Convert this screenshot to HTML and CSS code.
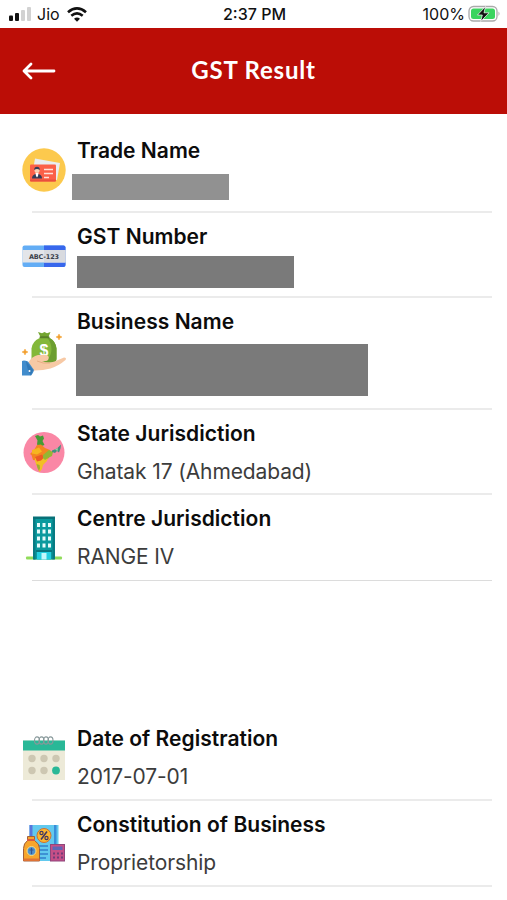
FILE: index.html
```html
<!DOCTYPE html>
<html lang="en">
<head>
    <meta charset="UTF-8">
    <meta name="viewport" content="width=device-width, initial-scale=1.0">
    <title>GST Result</title>
    <link rel="stylesheet" href="styles.css">
</head>
<body>
    <div class="status-bar">
        <div class="status-left">
            <svg class="signal" width="24" height="14" viewBox="0 0 24 14">
                <rect x="1" y="8.500" width="4" height="5.500" rx="1" fill="#111"/>
                <rect x="7" y="6" width="4" height="8" rx="1" fill="#111"/>
                <rect x="13" y="3" width="4" height="11" rx="1" fill="#d2d2d2"/>
                <rect x="19" y="0" width="4" height="14" rx="1" fill="#d2d2d2"/>
            </svg>
            <span class="carrier">Jio</span>
            <svg class="wifi" width="20" height="15" viewBox="0 0 20 15" fill="none" stroke="#111">
                <path d="M1 5.2Q10-2.4 19 5.2" stroke-width="2.7"/>
                <path d="M4.3 8.8Q10 4 15.7 8.8" stroke-width="2.6"/>
                <path d="M7 11.7Q10 9.1 13 11.7L10 14.7z" fill="#111" stroke="none"/>
            </svg>
        </div>
        <div class="status-time">2:37 PM</div>
        <div class="status-right">
            <span class="percent">100%</span>
            <svg class="battery" width="33" height="18" viewBox="0 0 33 18">
                <rect x="1" y="1.5" width="28" height="14.5" rx="4.5" fill="#fff" stroke="#aaa" stroke-width="1.3"/>
                <rect x="3" y="3.5" width="24" height="10.5" rx="2.5" fill="#3bd45f"/>
                <path d="M30.500 6.500q2 2 0 4.500z" fill="#aaa"/>
                <path d="M17.500 1.500L9.500 10h4.800l-1.600 6.500L21 7.800h-5z" fill="#111" stroke="#fff" stroke-width=".7"/>
            </svg>
        </div>
    </div>

    <header class="header">
        <svg class="back" width="34" height="18" viewBox="0 0 34 18" fill="none" stroke="#fff" stroke-width="2.8" stroke-linecap="round" stroke-linejoin="round">
            <path d="M32 9H2M9 2L2 9l7 7"/>
        </svg>
        <h1>GST Result</h1>
    </header>

    <main class="list">
        <section class="row">
            <svg class="icon" viewBox="0 0 44 44">
                <circle cx="22" cy="22" r="21.7" fill="#fcc94d"/>
                <path d="M13 10.500l25 4.500-3 17-25-4z" fill="#e9edf0"/>
                <rect x="8" y="16.500" width="26" height="17" rx="1" fill="#fb6048"/>
                <rect x="8" y="31.500" width="26" height="2" rx="1" fill="#e9503c"/>
                <path d="M10 30.500q0-4 4-4.500h2q4 .5 4 4.500z" fill="#343c58"/>
                <path d="M13.500 25h3l-.5 3-1 1.500-1-1.500z" fill="#fff"/>
                <circle cx="15" cy="22.500" r="2.500" fill="#f8cfb1"/>
                <path d="M12.200 22q0-3.300 2.800-3.300t2.800 3.300q-2.800-2-5.600 0z" fill="#343c58"/>
                <path d="M22 21.500h9M22 25.500h9M22 29.500h5" stroke="#ffe1d9" stroke-width="1.500"/>
            </svg>
            <div class="info">
                <h2>Trade Name</h2>
                <div class="redacted redacted-trade"></div>
            </div>
        </section>

        <section class="row row-short">
            <svg class="icon" viewBox="0 0 44 44">
                <rect x=".5" y="11.500" width="43" height="21.500" rx="2" fill="#63adf5"/>
                <path d="M22 11.500h19.500a2 2 0 0 1 2 2V31a2 2 0 0 1-2 2H22z" fill="#3867ec"/>
                <rect x=".5" y="16" width="43" height="12.500" fill="#e3e5e9"/>
                <path d="M22 16h21.500v12.500H22z" fill="#d8dadf"/>
                <text x="22" y="24.600" class="plate" text-anchor="middle" textLength="30">ABC-123</text>
            </svg>
            <div class="info">
                <h2>GST Number</h2>
                <div class="redacted redacted-number"></div>
            </div>
        </section>

        <section class="row row-tall">
            <svg class="icon" viewBox="0 0 44 44">
                <path d="M16 0l4 1.200L22.500 0 25 1.200 28.500 0 26 6h-7z" fill="#73a530"/>
                <path d="M18.500 5.500h8.500q7 4 7.500 11v10q0 4-4 4H13.500q-4 0-4-4v-10q.5-7 9-11z" fill="#83b83a"/>
                <path d="M27 5.500q7 4 7.500 11v10q0 4-4 4H16q13-1 13.500-13 0-7-4.500-12z" fill="#6c9e30"/>
                <rect x="17.500" y="4.200" width="10" height="2" rx="1" fill="#597f29"/>
                <text x="22" y="23.500" class="dollar" text-anchor="middle">$</text>
                <path d="M6 31q4-7 10-8h8.500q3 1 2 4t-7 2q7 3 13 .500L42 25.500q3 0 1.500 2.500-7 6-15 8.500-7 2-16 2l-2 2z" fill="#f7c9a5"/>
                <path d="M15 29q6 3 13 2" fill="none" stroke="#e9ad82" stroke-width="1"/>
                <path d="M0 29q2-1 6 .5l6 8.500q-1 4-3 5.500H0z" fill="#418ccc"/>
                <path d="M4 29l7 9-2 5.500q-4-5-5-14.500z" fill="#3279b7"/>
                <circle cx="7.500" cy="39" r="1" fill="#fff"/>
                <path d="M37 2l.9 2.100L40 5l-2.100.9L37 8l-.9-2.100L34 5l2.100-.9zM3 17l.9 2.100L6 20l-2.100.9L3 23l-.9-2.100L0 20l2.100-.9z" fill="#f3a030" stroke="#f3a030" stroke-width=".5"/>
            </svg>
            <div class="info">
                <h2>Business Name</h2>
                <div class="redacted redacted-business"></div>
            </div>
        </section>

        <section class="row row-short">
            <svg class="icon" viewBox="0 0 44 44">
                <circle cx="22" cy="21.500" r="20.500" fill="#fa87a5"/>
                <path d="M13 5l3-1 2 1.500 3-1 1 3-1.500 2.500 2 4-4.500 1.500-3-2 .5-4z" fill="#479b35"/>
                <path d="M15 14l4-.5 4 3.500 5 2 1 3-3 6-7 2-8-1-1.500-5-1.500-1 4-4z" fill="#f38521"/>
                <path d="M10 19l7-2.500 3 4-5 3-5-1z" fill="#f6b51f"/>
                <path d="M13 27l9-2 4 1-1 4-4 4-1 4-2.500 3-2-4-2.500-7z" fill="#f3bf24"/>
                <path d="M13 26l7-2.500 2 3-3 3-4 1z" fill="#ec5b24"/>
                <path d="M21 24l6-5 4 2-1 4-4 2-3 2-2-2z" fill="#94b633"/>
                <path d="M14.500 33l3 1 .5 3-1 3-1.500-3z" fill="#a0ae32"/>
                <path d="M30 19.500l5-2 4-4-.5 4-1.500 4-2-1.500-2 2-3-1z" fill="#42917c"/>
                <path d="M33 18.500l3-1.500-.5 3z" fill="#9bd0a0"/>
            </svg>
            <div class="info">
                <h2>State Jurisdiction</h2>
                <p>Ghatak 17 (Ahmedabad)</p>
            </div>
        </section>

        <section class="row row-thin">
            <svg class="icon" viewBox="0 0 44 44">
                <rect x="4" y="40.500" width="36" height="3" rx="1" fill="#91dc5a"/>
                <rect x="11.500" y="1" width="20" height="42.500" fill="#0b9a9e"/>
                <path d="M11 .5h22V3H11z" fill="#087178"/>
                <path d="M11 3h2.500v40.500H11zM30.500 3H33v40.500h-2.500z" fill="#087b83"/>
                <path d="M14 34h16v2H14z" fill="#08757d"/>
                <path d="M15 36h14v7.500H15z" fill="#22cfe1"/>
                <rect x="19.500" y="37" width="5" height="6.500" fill="#c3f8fc"/>
                <g fill="#e8fbfb">
                    <path d="M15 7h3v4h-3zM20.500 7h3v4h-3zM26 7h3v4h-3z"/>
                    <path d="M15 13.500h3v4h-3zM20.500 13.500h3v4h-3zM26 13.500h3v4h-3z"/>
                    <path d="M15 20.500h3v4h-3zM20.500 20.500h3v4h-3zM26 20.500h3v4h-3z"/>
                    <path d="M15 27.500h3v4h-3zM20.500 27.500h3v4h-3zM26 27.500h3v4h-3z"/>
                </g>
            </svg>
            <div class="info">
                <h2>Centre Jurisdiction</h2>
                <p>RANGE IV</p>
            </div>
        </section>

        <section class="row row-gap">
            <svg class="icon" viewBox="0 0 44 44">
                <rect x="1" y="4.500" width="42" height="39.500" fill="#edead8"/>
                <rect x="1" y="4.500" width="42" height="10" fill="#29b897"/>
                <g fill="none" stroke="#87989a" stroke-width="1.100">
                    <ellipse cx="15" cy="4.500" rx="2.500" ry="3.600"/>
                    <ellipse cx="19.500" cy="4.500" rx="2.500" ry="3.600"/>
                    <ellipse cx="24" cy="4.500" rx="2.500" ry="3.600"/>
                    <ellipse cx="28.500" cy="4.500" rx="2.500" ry="3.600"/>
                </g>
                <g fill="#cdc7b2">
                    <circle cx="10" cy="22.500" r="3.700"/>
                    <circle cx="22" cy="22.500" r="3.700"/>
                    <circle cx="34" cy="22.500" r="3.700"/>
                    <circle cx="10" cy="34.500" r="3.700"/>
                    <circle cx="22" cy="34.500" r="3.700"/>
                </g>
                <circle cx="34" cy="34.500" r="3.900" fill="#29b897"/>
            </svg>
            <div class="info">
                <h2>Date of Registration</h2>
                <p>2017-07-01</p>
            </div>
        </section>

        <section class="row">
            <svg class="icon" viewBox="0 0 44 44">
                <rect x="7.500" y="3" width="29" height="36" fill="#62c9ee"/>
                <path d="M7.500 3h3v36h-3z" fill="#5776dc"/>
                <path d="M32 3h2.500v20H32z" fill="#398dd9"/>
                <path d="M16 24h10M16 28h10M16 32h10M16 36h8" stroke="#327fcb" stroke-width="1.300"/>
                <circle cx="22" cy="13.500" r="7" fill="#fdb62f" stroke="#cc7132"/>
                <path d="M25 9.500l-6 8" stroke="#423861" stroke-width="1.500"/>
                <circle cx="19.500" cy="11" r="1.600" fill="none" stroke="#423861" stroke-width="1.200"/>
                <circle cx="24.500" cy="16" r="1.600" fill="none" stroke="#423861" stroke-width="1.200"/>
                <path d="M5.500 14.500h7v4q5 3 5 8V39h-16V26.500q0-5 4-8z" fill="#f7a52c" stroke="#9f603c"/>
                <path d="M5 18h8" stroke="#d75a3f" stroke-width="2"/>
                <path d="M1.500 36.500h16V39h-16z" fill="#df7335"/>
                <circle cx="9.500" cy="29" r="4.500" fill="#4f91ce" stroke="#ffe080"/>
                <path d="M9.500 26v6M7.500 28h4" stroke="#315694" stroke-width="1.200"/>
                <rect x="28.500" y="22.500" width="14" height="16.500" fill="#c64f87" stroke="#8f477c"/>
                <rect x="30.500" y="24.500" width="10" height="3.500" fill="#6065b5"/>
                <path d="M31 31.500h2M35 31.500h2M39 31.500h2M31 35.500h2M35 35.500h2M39 35.500h2" stroke="#713d78" stroke-width="2"/>
            </svg>
            <div class="info">
                <h2>Constitution of Business</h2>
                <p>Proprietorship</p>
            </div>
        </section>
    </main>
</body>
</html>
```
FILE: styles.css
```css
* {
    box-sizing: border-box;
    margin: 0;
    padding: 0;
}

body {
    font-family: Inter, "Liberation Sans", sans-serif;
    background-color: #fff;
    color: #111;
    height: 900px;
    overflow: hidden;
}

svg {
    display: block;
    flex-shrink: 0;
}

.status-bar {
    display: grid;
    grid-template-columns: 1fr auto 1fr;
    align-items: center;
    height: 28px;
    padding: 0 6px 0 8px;
    font-size: 16px;
    line-height: 28px;
}

.status-left,
.status-right {
    display: flex;
    align-items: center;
}

.status-right {
    justify-content: flex-end;
    gap: 3px;
}

.carrier {
    margin: 0 7px 0 5px;
}

.status-time {
    font-weight: 500;
    letter-spacing: 0;
}

.header {
    display: grid;
    grid-template-columns: 34px 1fr 34px;
    align-items: center;
    height: 86px;
    padding: 0 22px;
    background-color: #bb0d06;
    color: #fff;
}

.header h1 {
    padding-bottom: 3px;
    font-family: Lato, sans-serif;
    font-size: 24px;
    font-weight: 700;
    letter-spacing: 0.8px;
    text-align: center;
}

.list {
    padding-top: 13px;
}

.row {
    display: flex;
    align-items: center;
    gap: 11px;
    height: 86px;
    padding: 0 15px 0 22px;
    /* divider starts a bit right of the icon edge */
    background: linear-gradient(#ebebeb, #ebebeb) 32px 100% / 460px 2px no-repeat;
}

.row-short {
    height: 85px;
}

.row-tall {
    height: 112px;
}

.row-thin {
    background-size: 460px 1px;
    background-image: linear-gradient(#dcdcdc, #dcdcdc);
}

.row-gap {
    margin-top: 134px;
}

.icon {
    width: 44px;
    height: 44px;
    overflow: visible;
}

.info {
    align-self: stretch;
    padding-top: 11px;
}

.info h2 {
    font-size: 21px;
    font-weight: 600;
    line-height: 26px;
    letter-spacing: 0.03px;
    color: #0c0c0c;
    white-space: nowrap;
}

.info p {
    margin-top: 12px;
    font-size: 21px;
    line-height: 26px;
    letter-spacing: -0.12px;
    color: #3c3c3c;
    white-space: nowrap;
}

.redacted {
    background-color: #7a7a7a;
}

.redacted-trade {
    width: 157px;
    height: 26px;
    margin: 10px 0 0 -5px;
    background-color: #919191;
}

.redacted-number {
    width: 217px;
    height: 32px;
    margin-top: 6px;
}

.redacted-business {
    width: 292px;
    height: 52px;
    margin: 9px 0 0 -1px;
}

.plate {
    font: 700 6.5px "DejaVu Sans", sans-serif;
    fill: #3b3f4a;
}

.dollar {
    font: 700 16px "Liberation Sans", sans-serif;
    fill: #fff;
}
```
